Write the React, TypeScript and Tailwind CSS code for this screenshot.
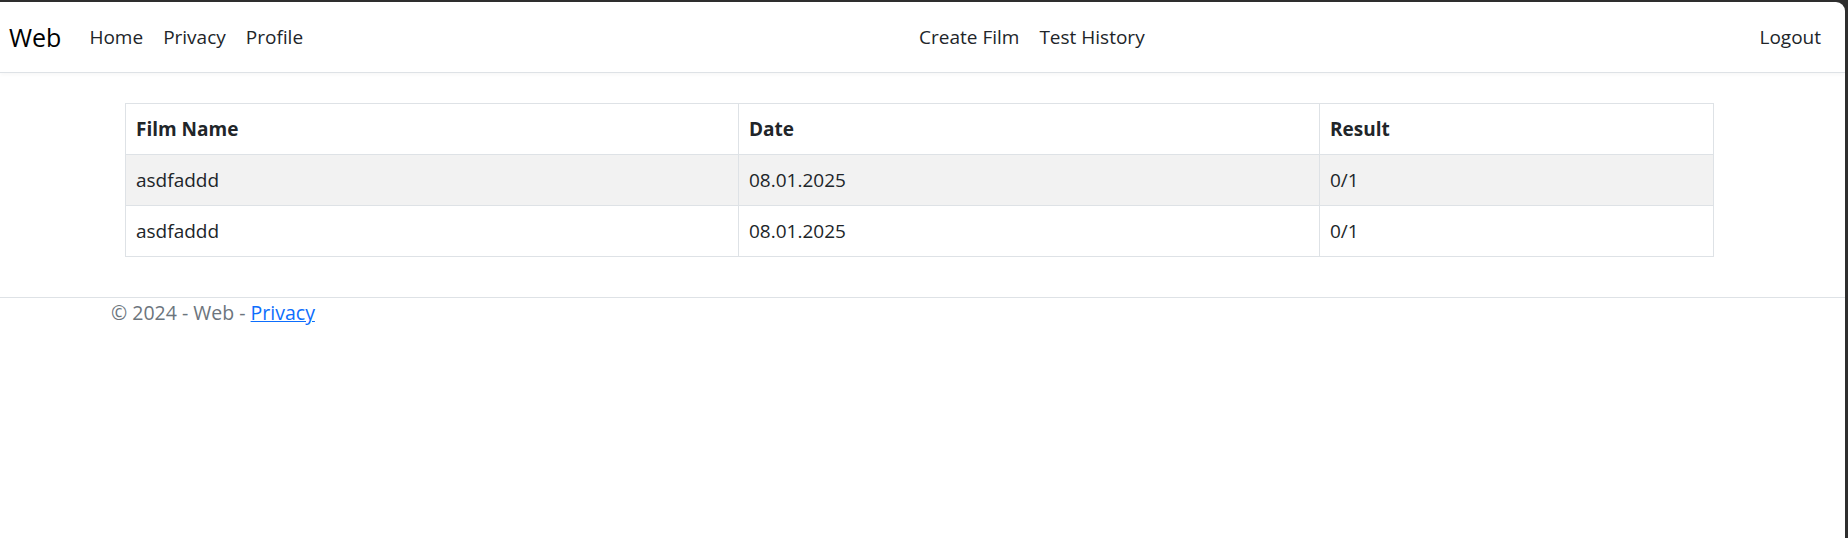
import React from "react";

const rows = [
  { name: "asdfaddd", date: "08.01.2025", result: "0/1" },
  { name: "asdfaddd", date: "08.01.2025", result: "0/1" },
];

export default function App() {
  return (
    <div className="w-full h-[538px] bg-[#2e2e2e] pt-[2px] pr-[3px]">
      <div className="w-full h-full bg-white rounded-tr-[9px] overflow-hidden text-[#212529] font-['Open_Sans',sans-serif]">
        <nav className="h-[71px] flex items-center border-b border-[#dee2e6] shadow-[0_2px_4px_rgba(0,0,0,0.03)]">
          <span className="ml-[9px] text-[25px] text-black leading-none">Web</span>
          <div className="flex ml-[18px] text-[19px]">
            <a className="px-[10px]">Home</a>
            <a className="px-[10px]">Privacy</a>
            <a className="px-[10px]">Profile</a>
          </div>
          <div className="flex ml-[596px] text-[19px]">
            <a className="px-[10px]">Create Film</a>
            <a className="px-[10px]">Test History</a>
          </div>
          <a className="ml-auto mr-[24px] text-[19px]">Logout</a>
        </nav>
        <main className="pt-[30px] pb-[40px] pl-[125px] pr-[131px]">
          <table className="w-full border-collapse border border-[#dee2e6] text-[19px]">
            <thead>
              <tr className="h-[51px]">
                <th className="w-[613px] border border-[#dee2e6] px-[10px] text-left font-bold">Film Name</th>
                <th className="w-[581px] border border-[#dee2e6] px-[10px] text-left font-bold">Date</th>
                <th className="border border-[#dee2e6] px-[10px] text-left font-bold">Result</th>
              </tr>
            </thead>
            <tbody>
              {rows.map((r, i) => (
                <tr key={i} className={i % 2 === 0 ? "h-[51px] bg-[#f2f2f2]" : "h-[51px]"}>
                  <td className="border border-[#dee2e6] px-[10px]">{r.name}</td>
                  <td className="border border-[#dee2e6] px-[10px]">{r.date}</td>
                  <td className="border border-[#dee2e6] px-[10px]">{r.result}</td>
                </tr>
              ))}
            </tbody>
          </table>
        </main>
        <footer className="border-t border-[#dee2e6] pl-[111px] text-[19.5px] leading-[30px] text-[#6c757d]">
          © 2024 - Web - <a className="text-[#0d6efd] underline">Privacy</a>
        </footer>
      </div>
    </div>
  );
}
